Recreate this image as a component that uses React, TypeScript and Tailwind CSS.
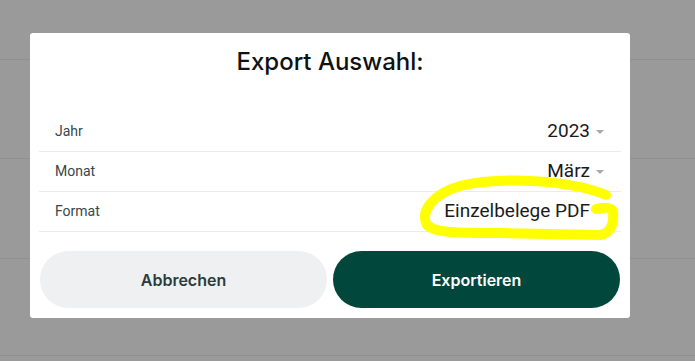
import type { ReactNode } from 'react';

interface SelectRowProps {
  label: string;
  value: string;
}

function Caret() {
  return (
    <span className="ml-[6px] inline-block h-0 w-0 border-x-[4px] border-t-[4px] border-x-transparent border-t-[#a9a9a9]" />
  );
}

function SelectRow({ label, value }: SelectRowProps) {
  return (
    <div className="flex h-[40px] items-center justify-between border-b border-[#ececec] pl-[16px] pr-[17px]">
      <span className="text-[14px] text-[#37474a]">{label}</span>
      <span className="flex items-center text-[19px] text-[#1b1b1b]">
        {value}
        <Caret />
      </span>
    </div>
  );
}

function Button({ children, primary }: { children: ReactNode; primary?: boolean }) {
  return (
    <button
      className={
        primary
          ? 'h-[57px] flex-1 rounded-full bg-[#02473b] text-[16px] font-semibold text-white'
          : 'h-[57px] flex-1 rounded-full bg-[#eff0f2] text-[16px] font-semibold text-[#2c3c3b]'
      }
      style={{ fontFamily: 'Inter, sans-serif' }}
    >
      {children}
    </button>
  );
}

export default function App() {
  return (
    <div
      className="relative h-[361px] w-[695px] overflow-hidden bg-[#9a9a9a]"
      style={{ fontFamily: 'Roboto, "Liberation Sans", sans-serif' }}
    >
      {/* page behind the modal */}
      <div className="flex flex-col">
        <div className="h-[60px] border-b border-[#8f8f8f]" />
        <div className="h-[99px] border-b border-[#8f8f8f]" />
        <div className="h-[100px] border-b border-[#8f8f8f]" />
        <div className="h-[97px] border-b border-[#8f8f8f]" />
      </div>

      <div className="absolute left-[30px] top-[33px] w-[600px] rounded-[3px] bg-white px-[9px] pb-[10px] pt-[13px]">
        <h2
          className="h-[32px] text-center text-[24px] font-medium leading-[32px] text-[#111]"
          style={{ fontFamily: 'Inter, sans-serif' }}
        >
          Export Auswahl:
        </h2>
        <div className="mt-[34px]">
          <SelectRow label="Jahr" value="2023" />
          <SelectRow label="Monat" value="März" />
          <SelectRow label="Format" value="Einzelbelege PDF" />
        </div>
        <div className="mt-[19px] flex gap-[6px] px-[1px]">
          <Button>Abbrechen</Button>
          <Button primary>Exportieren</Button>
        </div>
      </div>

      {/* highlighter annotation */}
      <svg className="pointer-events-none absolute inset-0" width="695" height="361" viewBox="0 0 695 361">
        <path
          d="M606 195 C570 180 500 176 460 186 C432 194 420 212 427 225 C434 233 460 233 500 233 L600 235 C612 233 614 222 613 212 C612 207 604 207 596 209"
          fill="none"
          stroke="#ffff00"
          strokeWidth="10"
          strokeLinecap="round"
          strokeLinejoin="round"
        />
      </svg>
    </div>
  );
}
